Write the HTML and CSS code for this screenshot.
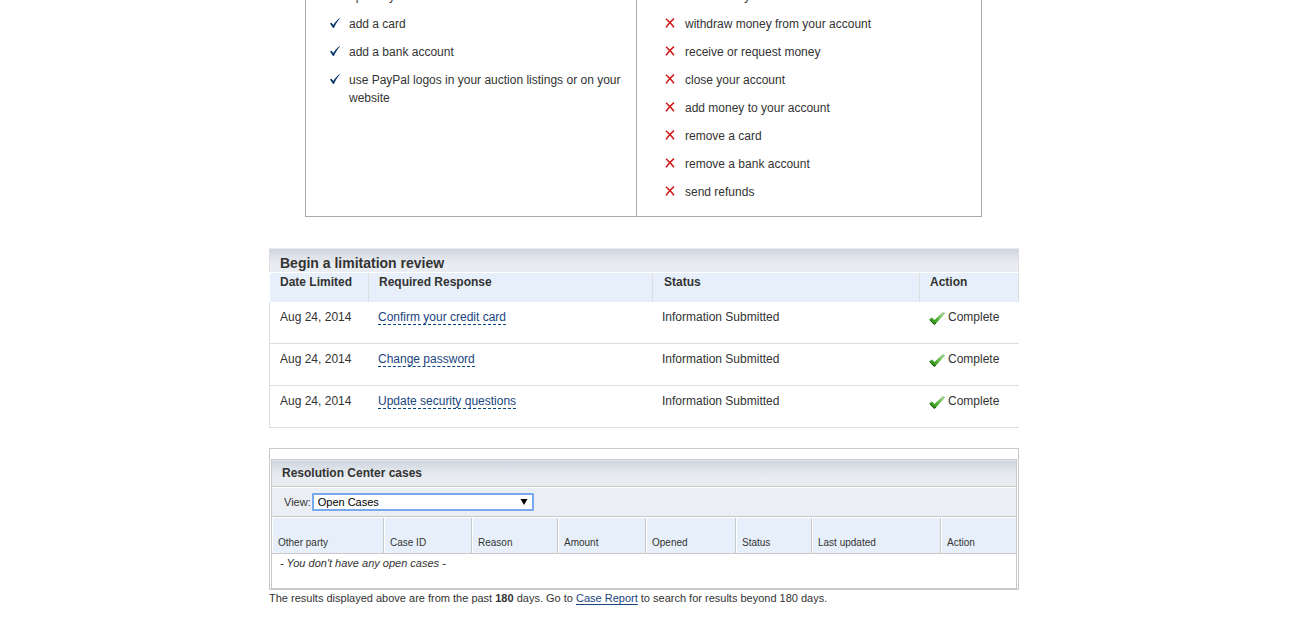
FILE: index.html
```html
<!DOCTYPE html>
<html lang="en">
<head>
<meta charset="utf-8">
<title>Account limitations</title>
<link rel="stylesheet" href="styles.css">
</head>
<body>
<svg class="sprite" aria-hidden="true">
  <symbol id="tick" viewBox="0 0 10 10"><path d="M0 5.600 1.500 4.800 3.400 7 C5 4.400 7 1.800 9.800 0 L10 .4 C7.600 3 5.600 6 4 9.800 L3 9.900Z" fill="#0b3768"/></symbol>
  <symbol id="cross" viewBox="0 0 10 10"><path d="M1 .8 C3 2.600 6.500 6 9 9.200M9 .6 C6 3 3 6 1 9.400" fill="none" stroke="#d01515" stroke-width="1.500"/></symbol>
  <linearGradient id="leaf" x1="0" y1="1" x2="1" y2="0"><stop offset="0" stop-color="#1c7a0c"/><stop offset=".45" stop-color="#4db52c"/><stop offset="1" stop-color="#c5efaa"/></linearGradient>
  <symbol id="done" viewBox="0 0 16 13"><path d="M.5 7.500 3 5.800 5.500 8.300 13.800.7 15.600 1.300 6 12.300 4.700 12.300Z" fill="url(#leaf)" stroke="#2f8a1c" stroke-width=".5"/><path d="M1 8 5.200 12.200 7 11" fill="none" stroke="#17600a" stroke-width="1"/></symbol>
</svg>
<main class="page">
  <section class="access">
    <ul class="access-list can">
      <li><svg class="mark"><use href="#tick"/></svg>update your account information</li>
      <li><svg class="mark"><use href="#tick"/></svg>add a card</li>
      <li><svg class="mark"><use href="#tick"/></svg>add a bank account</li>
      <li><svg class="mark"><use href="#tick"/></svg>use PayPal logos in your auction listings or on your website</li>
    </ul>
    <ul class="access-list cannot">
      <li><svg class="mark"><use href="#cross"/></svg>send money</li>
      <li><svg class="mark"><use href="#cross"/></svg>withdraw money from your account</li>
      <li><svg class="mark"><use href="#cross"/></svg>receive or request money</li>
      <li><svg class="mark"><use href="#cross"/></svg>close your account</li>
      <li><svg class="mark"><use href="#cross"/></svg>add money to your account</li>
      <li><svg class="mark"><use href="#cross"/></svg>remove a card</li>
      <li><svg class="mark"><use href="#cross"/></svg>remove a bank account</li>
      <li><svg class="mark"><use href="#cross"/></svg>send refunds</li>
    </ul>
  </section>

  <section class="review">
    <h2 class="review-title">Begin a limitation review</h2>
    <table class="review-table">
      <colgroup><col class="r-date"><col class="r-response"><col class="r-status"><col></colgroup>
      <thead>
        <tr><th>Date Limited</th><th>Required Response</th><th>Status</th><th>Action</th></tr>
      </thead>
      <tbody>
        <tr><td>Aug 24, 2014</td><td><a class="task" href="#">Confirm your credit card</a></td><td>Information Submitted</td><td><span class="state"><svg class="done"><use href="#done"/></svg>Complete</span></td></tr>
        <tr><td>Aug 24, 2014</td><td><a class="task" href="#">Change password</a></td><td>Information Submitted</td><td><span class="state"><svg class="done"><use href="#done"/></svg>Complete</span></td></tr>
        <tr><td>Aug 24, 2014</td><td><a class="task" href="#">Update security questions</a></td><td>Information Submitted</td><td><span class="state"><svg class="done"><use href="#done"/></svg>Complete</span></td></tr>
      </tbody>
    </table>
  </section>

  <section class="cases">
    <div class="cases-box">
      <h2 class="cases-title">Resolution Center cases</h2>
      <div class="cases-view">
        <label for="view">View:</label>
        <span class="picker">
          <select id="view" class="picker-select"><option>Open Cases</option></select>
          <svg class="picker-arrow" viewBox="0 0 8 6"><path d="M.5 0h7L4 6Z"/></svg>
        </span>
      </div>
      <table class="cases-table">
        <colgroup><col class="c-party"><col class="c-id"><col class="c-reason"><col class="c-amount"><col class="c-opened"><col class="c-status"><col class="c-updated"><col></colgroup>
        <thead>
          <tr><th>Other party</th><th>Case ID</th><th>Reason</th><th>Amount</th><th>Opened</th><th>Status</th><th>Last updated</th><th>Action</th></tr>
        </thead>
        <tbody>
          <tr><td colspan="8">- You don't have any open cases -</td></tr>
        </tbody>
      </table>
    </div>
  </section>
  <p class="note">The results displayed above are from the past <b>180</b> days. Go to <a class="report" href="#">Case Report</a> to search for results beyond 180 days.</p>
</main>
</body>
</html>
```
FILE: styles.css
```css
* { box-sizing: border-box; }

body {
  margin: 0;
  padding-right: 7px;
  background: #fff;
  color: #333;
  font: 12px/18px Arial, "Liberation Sans", sans-serif;
  overflow: hidden;
}

.sprite { position: absolute; width: 0; height: 0; }

.page { max-width: 750px; margin: 0 auto; }

table { width: 100%; border-collapse: separate; border-spacing: 0; table-layout: fixed; }
th, td { text-align: left; }
h2, p, ul { margin: 0; padding: 0; }

/* What the account can and cannot do */
.access {
  display: flex;
  margin: -24px 37px 0 36px;
  border: 1px solid #a9a9a9;
}
.access-list {
  display: flex;
  flex-direction: column;
  gap: 10px;
  padding: 10px 0 15px;
  list-style: none;
}
.access-list li { display: flex; }
.can { width: 331px; padding-left: 24px; border-right: 1px solid #a9a9a9; }
.cannot { flex: 1; padding-left: 28px; }
.mark { flex: none; width: 10px; height: 10px; margin: 3px 9px 0 0; }
.cannot .mark { margin-right: 10px; }

/* Limitation review */
.review { margin-top: 30px; padding-top: 1px; }
.review-title {
  padding: 6px 10px 0;
  border: solid #e0e0e0;
  border-width: 0 1px;
  background: linear-gradient(#e9ecf1 1px, #cfd5df 1px, #e2e6ec 11px, #e9ecf1 17px);
  font-size: 14px;
  line-height: 18px;
}
.r-date { width: 100px; }
.r-response { width: 284px; }
.r-status { width: 267px; }
.review-table { padding-top: 1px; }
.review-table th {
  height: 29px;
  padding: 0 11px;
  border-right: 1px solid #dedede;
  background: #e7f0fa;
  vertical-align: top;
}
.review-table th:last-child, .review-table th:nth-child(2) { padding-left: 10px; }
.review-table th:first-child { border-left: 1px solid #fff; padding-left: 10px; }
.review-table td {
  height: 42px;
  padding: 6px 9px 0;
  border-bottom: 1px solid #dedede;
  vertical-align: top;
}
.review-table td:first-child { padding-left: 10px; border-left: 1px solid #dedede; }
.task {
  display: inline-block;
  line-height: 14px;
  margin-top: 2px;
  color: #1a4480;
  text-decoration: none;
  border-bottom: 1px dashed #084482;
}
.state { display: flex; gap: 3px; }
.done { width: 16px; height: 13px; margin-top: 4px; }

/* Resolution Center cases */
.cases {
  margin-top: 20px;
  padding: 10px 1px 0;
  border: 1px solid #c9c9c9;
}
.cases-box { border: 1px solid #c9c9c9; }
.cases-title {
  padding: 4px 10px;
  border-top: 1px solid #e2e6ec;
  border-bottom: 1px solid #c9c9c9;
  background: linear-gradient(#cfd5df, #e2e6ec 10px, #e9ecf1 16px);
  font-size: 12px;
  line-height: 17px;
}
.cases-view {
  display: flex;
  align-items: center;
  gap: 1px;
  margin-top: 1px;
  padding: 5px 12px;
  border-bottom: 1px solid #c9c9c9;
  background: #ebeef3;
  font-size: 11px;
}
.picker { position: relative; display: flex; }
.picker-select {
  appearance: none;
  width: 222px;
  height: 18px;
  padding: 0 4px;
  border: 2px solid #78a8ee;
  border-radius: 1px;
  outline: 0;
  background: #fff;
  color: #000;
  font: 11px/14px Arial, "Liberation Sans", sans-serif;
}
.picker-arrow {
  position: absolute;
  right: 6px;
  top: 6px;
  width: 8px;
  height: 6px;
  pointer-events: none;
}
.c-party { width: 112px; }
.c-id, .c-amount { width: 88px; }
.c-reason { width: 86px; }
.c-opened { width: 90px; }
.c-status { width: 76px; }
.c-updated { width: 129px; }
.cases-table { padding-top: 1px; }
.cases-table th {
  height: 36px;
  padding: 0 5px 2px 6px;
  border: solid #c9c9c9;
  border-width: 0 1px 1px 0;
  background: #e7f0fa;
  box-shadow: inset 1px 0 #fff;
  font-size: 10px;
  font-weight: normal;
  line-height: 16px;
  vertical-align: bottom;
}
.cases-table th:last-child { border-right: 0; }
.cases-table td {
  height: 34px;
  padding: 0 8px;
  font-size: 11px;
  font-style: italic;
  vertical-align: top;
}
.note { font-size: 11px; line-height: 16px; }
.report { color: #1a4480; text-underline-offset: 2px; }
```
